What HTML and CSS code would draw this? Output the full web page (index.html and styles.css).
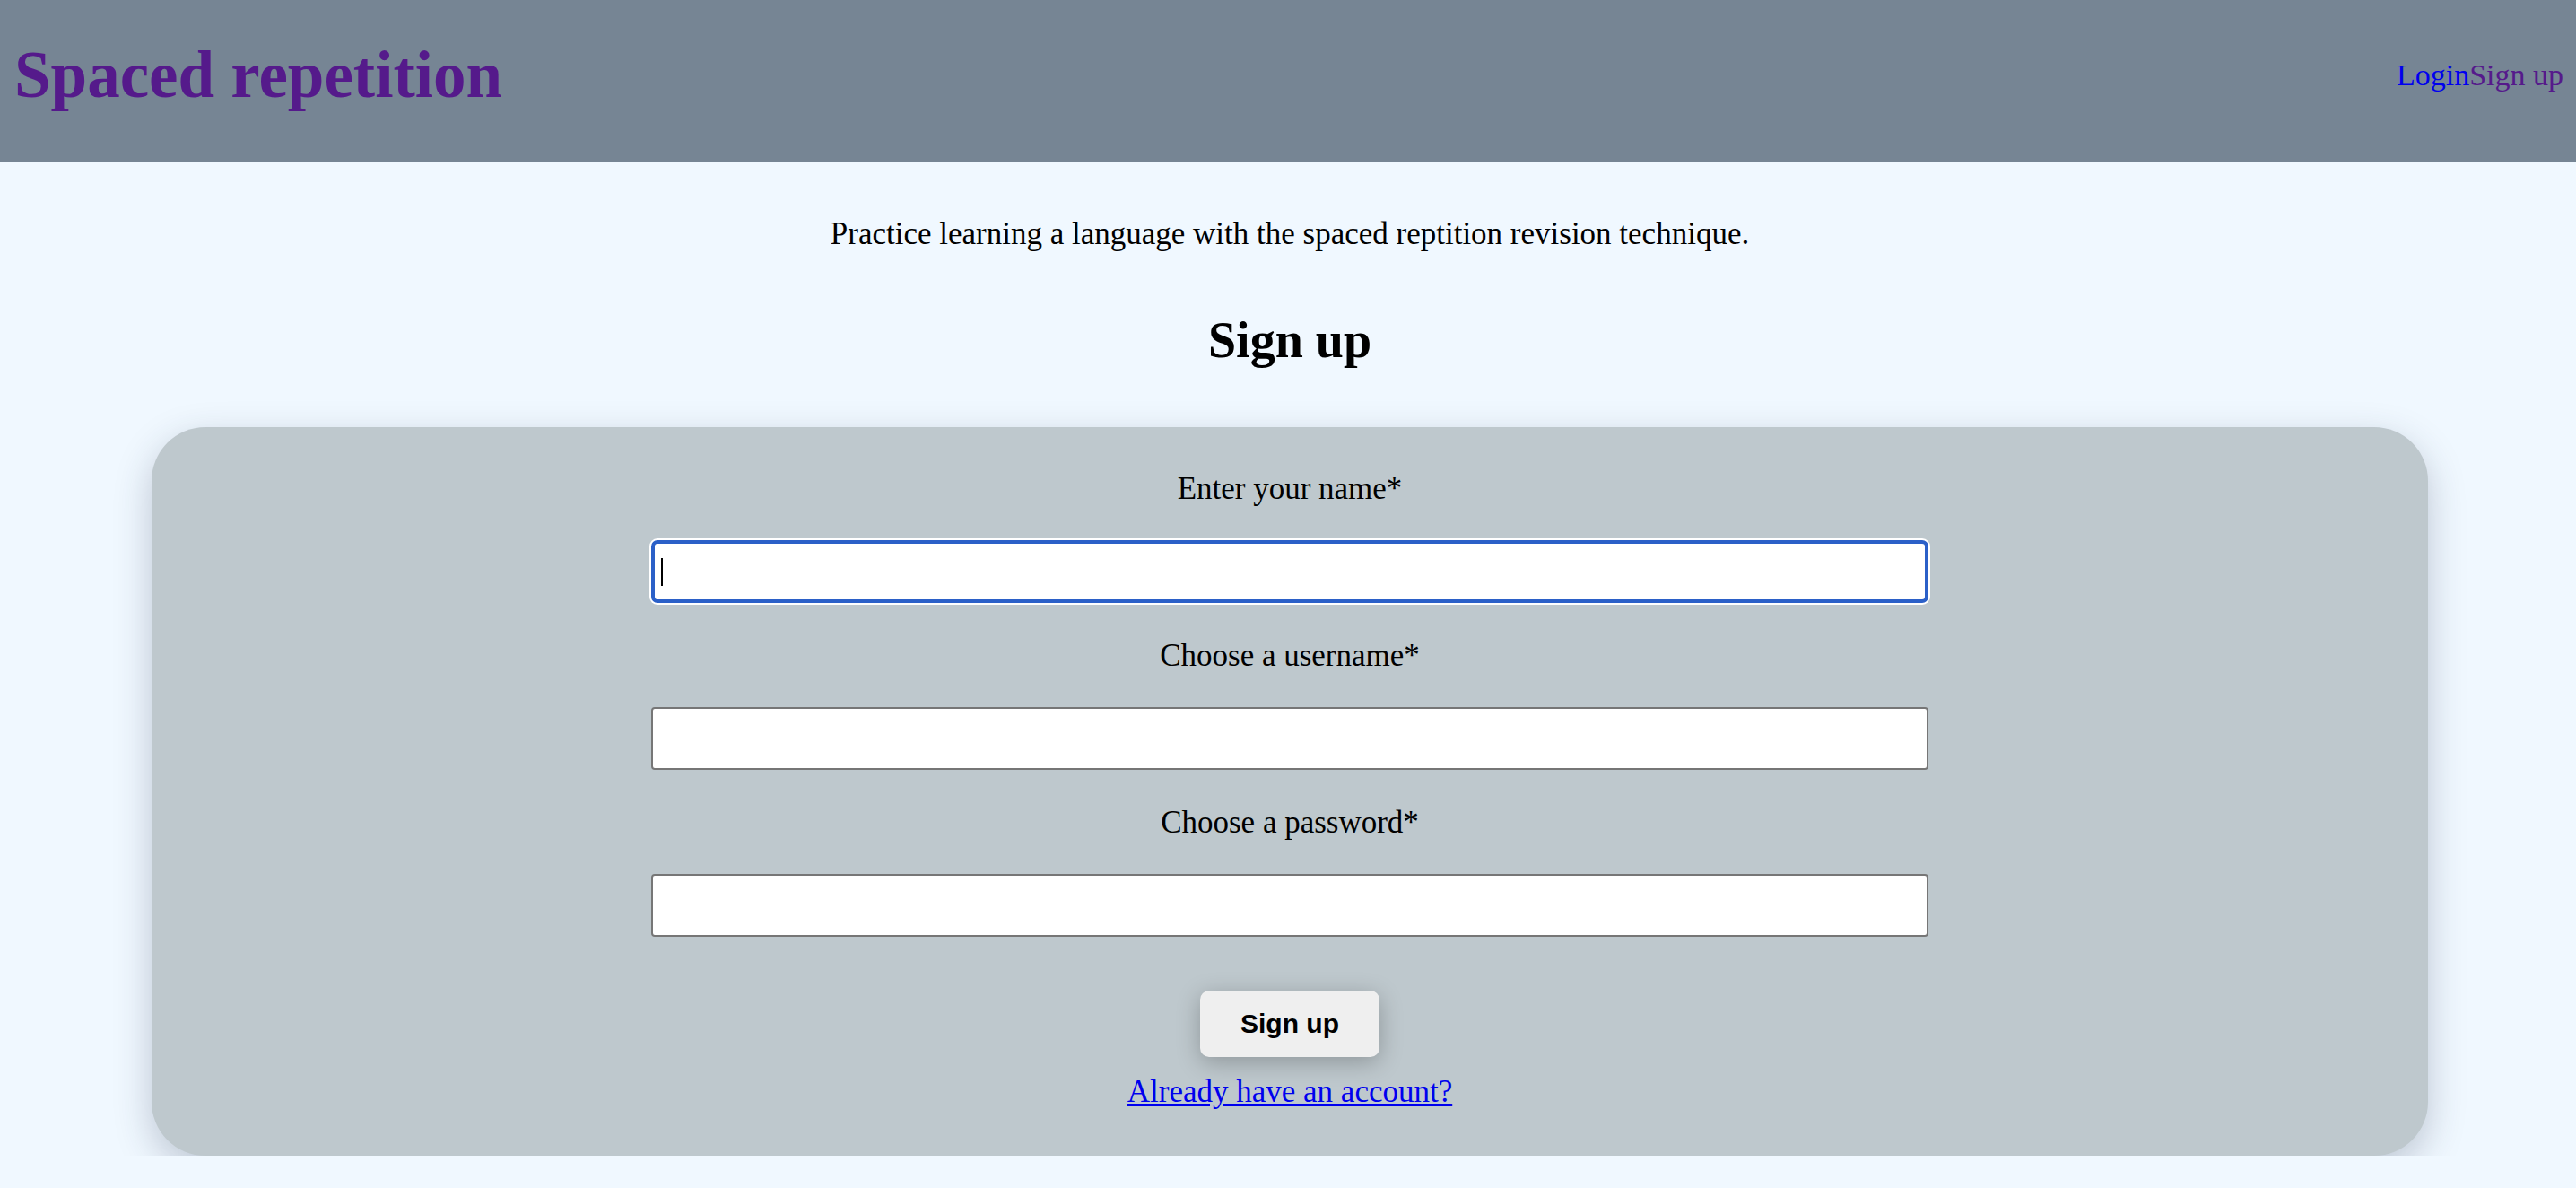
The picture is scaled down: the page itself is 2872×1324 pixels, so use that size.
FILE: index.html
```html
<!DOCTYPE html>
<html lang="en">
<head>
<meta charset="utf-8">
<title>Spaced repetition</title>
<link rel="stylesheet" href="styles.css">
</head>
<body>
<header class="site-header">
  <a class="brand" href="#">Spaced repetition</a>
  <nav class="nav">
    <a class="nav-link" href="#">Login</a><a class="nav-link nav-link--visited" href="#">Sign up</a>
  </nav>
</header>
<main class="main">
  <p class="intro">Practice learning a language with the spaced reptition revision technique.</p>
  <h2 class="page-title">Sign up</h2>
  <form class="card">
    <label class="field-label" for="name">Enter your name*</label>
    <div class="input-wrap">
      <input class="field-input field-input--focused" id="name" type="text">
      <span class="caret"></span>
    </div>
    <label class="field-label" for="username">Choose a username*</label>
    <div class="input-wrap">
      <input class="field-input" id="username" type="text">
    </div>
    <label class="field-label" for="password">Choose a password*</label>
    <div class="input-wrap">
      <input class="field-input" id="password" type="password">
    </div>
    <button class="submit" type="button">Sign up</button>
    <a class="account-link" href="#">Already have an account?</a>
  </form>
</main>
</body>
</html>
```

FILE: styles.css
```css
html, body {
  margin: 0;
  padding: 0;
}

body {
  background: #f0f8ff;
  font-family: "Liberation Serif", "Times New Roman", serif;
  color: #000;
  overflow: hidden;
}

.site-header {
  height: 180px;
  box-sizing: border-box;
  padding: 0 14px 12px 16px;
  background: #768594;
  display: flex;
  align-items: center;
  justify-content: space-between;
}

.brand {
  font-size: 73px;
  font-weight: bold;
  color: #551a8b;
  text-decoration: none;
  line-height: normal;
}

.nav {
  display: flex;
  font-size: 34px;
}

.nav-link {
  color: #0000ee;
  text-decoration: none;
}

.nav-link--visited {
  color: #551a8b;
}

.main {
  display: flex;
  flex-direction: column;
  align-items: center;
  padding-left: 4px;
}

.intro {
  margin: 61px 0 0 0;
  font-size: 35px;
  line-height: 39px;
  text-align: center;
}

.page-title {
  margin: 68px 0 0 0;
  font-size: 56px;
  font-weight: bold;
  line-height: 62px;
  text-align: center;
}

.card {
  margin-top: 66px;
  width: 2538px;
  box-sizing: border-box;
  padding: 49px 0 52px 0;
  background: #bec8cd;
  border-radius: 60px;
  box-shadow: 0 14px 40px rgba(40, 50, 80, 0.25);
  display: flex;
  flex-direction: column;
  align-items: center;
}

.field-label {
  display: block;
  font-size: 35px;
  line-height: 39px;
  text-align: center;
}

.input-wrap {
  position: relative;
  margin: 38px 0 39px 0;
  width: 1424px;
  height: 70px;
}

.field-input {
  display: block;
  width: 100%;
  height: 100%;
  box-sizing: border-box;
  margin: 0;
  padding: 0 10px;
  border: 2px solid #767676;
  border-radius: 4px;
  background: #fff;
  font-size: 32px;
  font-family: "Liberation Sans", Arial, sans-serif;
  outline: none;
}

.field-input--focused {
  border: 4px solid #2b60c8;
  border-radius: 7px;
  box-shadow: 0 0 0 2px #ffffff;
}

.caret {
  position: absolute;
  left: 11px;
  top: 20px;
  width: 2px;
  height: 31px;
  background: #000;
}

.submit {
  margin-top: 21px;
  width: 200px;
  height: 74px;
  border: none;
  border-radius: 10px;
  background: #efefef;
  color: #000;
  font-family: "Liberation Sans", Arial, sans-serif;
  font-size: 30px;
  font-weight: bold;
  box-shadow: 0 6px 26px rgba(0, 0, 0, 0.25);
  cursor: pointer;
}

.account-link {
  margin-top: 19px;
  font-size: 35px;
  line-height: 39px;
  color: #0000ee;
  text-decoration: underline;
}
```
